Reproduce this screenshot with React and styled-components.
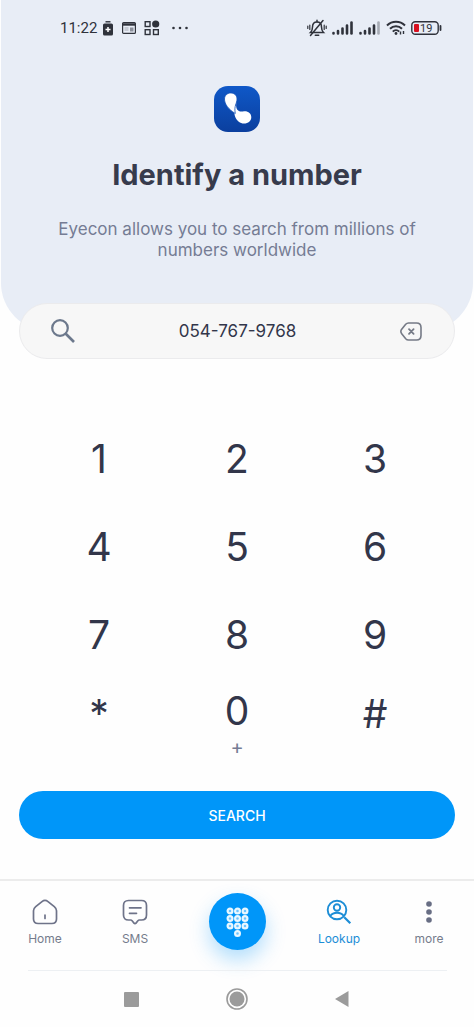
import React, { useState } from "react";
import styled, { createGlobalStyle } from "styled-components";

const GlobalStyle = createGlobalStyle`
  * {
    box-sizing: border-box;
  }
  body {
    margin: 0;
    background: #fefefe;
    font-family: "Inter", "Liberation Sans", sans-serif;
    color: #32364a;
  }
  button,
  input {
    font-family: inherit;
    color: inherit;
    border: none;
    padding: 0;
    background: none;
  }
  button {
    cursor: pointer;
  }
  svg {
    display: block;
    flex-shrink: 0;
  }
`;

const Page = styled.div`
  display: flex;
  flex-direction: column;
  min-height: 100vh;
`;

const Hero = styled.header`
  display: flex;
  flex-direction: column;
  align-items: center;
  margin: 0 1px;
  padding-bottom: 70px;
  background: #e8edf6;
  border-radius: 0 0 48px 48px;
`;

const StatusBar = styled.div`
  display: flex;
  align-items: center;
  justify-content: space-between;
  width: 100%;
  height: 56px;
  padding: 0 31px 0 59px;
  margin-bottom: 30px;
  color: #2f323b;
`;

const StatusGroup = styled.div`
  display: flex;
  align-items: center;
  gap: ${(props) => props.$gap}px;
`;

const Clock = styled.span`
  font-family: "Roboto", sans-serif;
  font-size: 15px;
  line-height: 20px;
`;

const Title = styled.h1`
  margin: 25px 0 0;
  font-size: 29px;
  line-height: 36px;
  font-weight: 700;
  color: #373b4c;
`;

const Subtitle = styled.p`
  max-width: 380px;
  margin: 26px 0 0;
  font-size: 17px;
  line-height: 21px;
  text-align: center;
  color: #757c94;
`;

const SearchBox = styled.label`
  display: flex;
  align-items: center;
  height: 56px;
  margin: -28px 19px 0;
  padding: 0 32px 0 31px;
  background: #f7f7f7;
  border: 1px solid #ebebed;
  border-radius: 28px;
`;

const NumberInput = styled.input`
  flex: 1;
  min-width: 0;
  font-size: 17px;
  line-height: 24px;
  text-align: center;
  outline: none;
`;

const IconButton = styled.button`
  display: flex;
`;

const Keypad = styled.div`
  display: grid;
  grid-template-columns: repeat(3, 1fr);
  grid-auto-rows: 88px;
  padding: 0 30px;
  margin-top: 56px;
`;

const Key = styled.button`
  display: flex;
  flex-direction: column;
  align-items: center;
  justify-content: ${(props) => (props.$bottom ? "flex-start" : "center")};
  padding-top: ${(props) => (props.$bottom ? 8 : 0)}px;
  font-size: 39px;
  line-height: ${(props) => (props.$symbol ? 54 : 48)}px;
`;

const KeyHint = styled.span`
  font-size: 20px;
  line-height: 24px;
  color: #757c94;
`;

const SearchButton = styled.button`
  height: 48px;
  margin: 24px 19px 40px;
  border-radius: 24px;
  background: #0096f9;
  color: #fff;
  font-size: 14px;
  font-weight: 500;
`;

const TabBar = styled.nav`
  display: flex;
  height: 91px;
  border-top: 2px solid #ececec;
`;

const Tab = styled.a`
  flex: 90 1 0;
  display: flex;
  flex-direction: column;
  align-items: center;
  gap: 6px;
  padding-top: 18px;
  font-size: 12px;
  line-height: 16px;
  text-decoration: none;
  color: ${(props) => (props.$active ? "#1c8dd6" : "#757c8c")};
`;

const DialSlot = styled.div`
  flex: 114 1 0;
  display: flex;
  justify-content: center;
  padding-top: 12px;
`;

const DialButton = styled.button`
  display: flex;
  align-items: center;
  justify-content: center;
  width: 57px;
  height: 57px;
  border-radius: 50%;
  background: #0096f9;
  box-shadow: 0 10px 20px rgba(0, 149, 250, 0.3);
`;

const SystemBar = styled.div`
  display: flex;
  align-items: center;
  justify-content: space-between;
  height: 57px;
  margin: 0 27px 0 28px;
  padding: 0 98px 0 96px;
  border-top: 1px solid #edf0f3;
`;

const keys = ["1", "2", "3", "4", "5", "6", "7", "8", "9", "*", "0", "#"];

const LeftStatusIcons = () => (
  <>
    <svg width="12" height="15" viewBox="0 0 12 15">
      <path d="M3.500 .8h5" stroke="currentColor" strokeWidth="1.400" />
      <rect x="1" y="2.500" width="10" height="12" rx="1.600" fill="currentColor" />
      <path d="M6 6v5M3.500 8.500h5" stroke="#fff" strokeWidth="1.500" />
    </svg>
    <svg width="14" height="12" viewBox="0 0 14 12">
      <rect x=".6" y=".6" width="12.800" height="10.800" rx="1" fill="none" stroke="currentColor" strokeWidth="1.200" />
      <path d="M1 2.500h12" stroke="currentColor" strokeWidth="2.400" />
      <path d="M2.500 6h4M2.500 8h4" stroke="#a5a9b3" />
      <rect x="8" y="5.500" width="3.500" height="4" fill="#8b8f9a" />
    </svg>
    <svg width="16" height="16" viewBox="0 0 16 16" fill="none" stroke="currentColor" strokeWidth="1.400">
      <rect x="1.200" y="1.700" width="4.800" height="4.800" />
      <circle cx="11.700" cy="4" r="3.600" fill="currentColor" stroke="none" />
      <rect x="1.200" y="9.700" width="4.800" height="4.800" />
      <rect x="9.500" y="9.700" width="4.800" height="4.800" />
    </svg>
  </>
);

const MoreDots = () => (
  <svg width="16" height="4" viewBox="0 0 16 4" fill="currentColor">
    <circle cx="1.500" cy="2" r="1.300" />
    <circle cx="8" cy="2" r="1.300" />
    <circle cx="14.500" cy="2" r="1.300" />
  </svg>
);

const MutedBell = () => (
  <svg width="20" height="18" viewBox="0 0 20 18" fill="none" stroke="currentColor" strokeWidth="1.500" strokeLinecap="round">
    <path d="M3.500 13.500h13c-1.600-1.500-2-2.500-2-5.500 0-3-1.700-5-4.500-5S5.500 5 5.500 8c0 3-.4 4-2 5.500z" />
    <path d="M8.300 16.200h3.400M10 1.200v1.500" />
    <path d="M2.800 6v4.500M.8 7v2.500M17.200 6v4.500M19.200 7v2.500" strokeWidth="1.200" />
    <path d="M3.500 16.500 16 1.500" />
  </svg>
);

const Signal = ({ weak }) => (
  <svg width="22" height="14" viewBox="0 0 22 14" stroke="currentColor" strokeWidth="2.600" strokeLinecap="round">
    <path d="M1.500 12.500v-.5M6 12.500v-2.500M10.500 12.500V7.500M15 12.500V4.500" />
    <path d="M19.500 12.500V1.500" opacity={weak ? 0.35 : 1} />
  </svg>
);

const Wifi = () => (
  <svg width="20" height="16" viewBox="0 0 20 16" fill="none" stroke="currentColor" strokeWidth="2">
    <path d="M1 5.500c5-5 13-5 18 0M4 8.800c3.400-3.400 8.600-3.400 12 0M6.800 11.600c1.800-1.800 4.600-1.800 6.400 0" />
    <circle cx="10" cy="13.500" r="1.400" fill="currentColor" stroke="none" />
    <path d="M14.500 11.500v3M17.500 11v3" strokeWidth="1.400" />
  </svg>
);

const Battery = () => (
  <svg width="31" height="14" viewBox="0 0 31 14">
    <rect x=".8" y=".8" width="26.400" height="12.400" rx="3.500" fill="none" stroke="currentColor" strokeWidth="1.400" />
    <path d="M29.500 5v4" stroke="currentColor" strokeWidth="1.800" strokeLinecap="round" />
    <rect x="3" y="3" width="5" height="8" rx="1" fill="#d8101f" />
    <text x="9" y="11" fontFamily="Roboto, sans-serif" fontSize="11" fill="currentColor">
      19
    </text>
  </svg>
);

const Logo = () => (
  <svg width="46" height="46" viewBox="0 0 46 46">
    <defs>
      <linearGradient id="logoBlue" x1="0" y1="0" x2="0" y2="1">
        <stop offset="0" stopColor="#0f58c8" />
        <stop offset="1" stopColor="#0b3f9e" />
      </linearGradient>
    </defs>
    <rect width="46" height="46" rx="14" fill="url(#logoBlue)" />
    <path d="M22.300 17c-1 6.500 2.200 9.300 6.700 8.400 4.700-.9 8.300 1.900 8.300 5.800 0 3.600-3 6.300-7.300 6.300-7.700 0-12.700-10-7.700-20.500z" fill="#fff" />
    <path
      d="M16.800 7c3.600 0 6.200 2.600 6.200 6 0 4.600-3.200 6.500-1.700 14.500C14.500 23.500 10.500 18 10.500 13c0-3.400 2.700-6 6.300-6z"
      fill="#fff"
      stroke="#1150b8"
      strokeWidth=".8"
    />
  </svg>
);

const SearchIcon = () => (
  <svg width="24" height="24" viewBox="0 0 24 24" fill="none" stroke="#6c788c" strokeWidth="2.200">
    <circle cx="9" cy="9" r="7.800" />
    <path d="M14.500 14.500 23 23" strokeWidth="2.600" />
  </svg>
);

const DeleteIcon = () => (
  <svg width="22" height="19" viewBox="0 0 22 19" fill="none" stroke="#757a86" strokeWidth="1.600" strokeLinecap="round" strokeLinejoin="round">
    <path d="M8.500 1h8c3 0 4.500 1.500 4.500 4.500v8c0 3-1.500 4.500-4.500 4.500h-8c-1.200 0-2-.4-2.800-1.300l-4-5c-1-1.300-1-3.100 0-4.400l4-5C6.500 1.400 7.300 1 8.500 1z" />
    <path d="m9 7.200 4.600 4.600M13.600 7.200 9 11.800" strokeWidth="1.800" />
  </svg>
);

const HomeIcon = () => (
  <svg width="26" height="26" viewBox="0 0 26 26" fill="none" stroke="#6e7389" strokeWidth="1.700" strokeLinecap="round">
    <path d="M1.500 11.800c0-1.700.7-3 2.200-4.200l6.300-5c2-1.600 4-1.600 6 0l6.300 5c1.500 1.200 2.200 2.500 2.200 4.200V20c0 3-1.600 4.500-4.600 4.500H6.100c-3 0-4.600-1.500-4.600-4.500z" />
    <path d="M13 16v3.500" />
  </svg>
);

const SmsIcon = () => (
  <svg width="26" height="26" viewBox="0 0 26 26" fill="none" stroke="#6e7389" strokeWidth="1.700" strokeLinecap="round" strokeLinejoin="round">
    <path d="M6.500 1.500h13c3.300 0 5 1.700 5 5V16c0 3.300-1.700 5-5 5h-2.200c-.6 0-1 .3-1.400.8l-1.900 2.300c-.6.700-1.400.7-2 0l-1.900-2.300c-.4-.5-.8-.8-1.400-.8H6.500c-3.300 0-5-1.700-5-5V6.500c0-3.300 1.700-5 5-5z" />
    <path d="M7.500 8.800h11.500M7.500 14.300h7" />
  </svg>
);

const LookupIcon = () => (
  <svg width="26" height="26" viewBox="0 0 26 26" fill="none" stroke="#1c8dd6" strokeWidth="1.900">
    <circle cx="11" cy="11" r="9.300" />
    <circle cx="11" cy="8.500" r="3.200" />
    <path d="M4.300 17c1.500-2.300 3.900-3.300 6.700-3.300s5.200 1 6.700 3.300" />
    <path d="m18.300 18.300 6 6" strokeWidth="2.200" />
  </svg>
);

const MoreIcon = () => (
  <svg width="26" height="26" viewBox="0 0 26 26" fill="#686e84">
    <circle cx="13" cy="5" r="2.800" />
    <circle cx="13" cy="13" r="2.800" />
    <circle cx="13" cy="21" r="2.800" />
  </svg>
);

const dots = [
  [4, 4], [11.500, 4], [19, 4],
  [4, 11.500], [11.500, 11.500], [19, 11.500],
  [4, 19], [11.500, 19], [19, 19],
  [11.500, 26.500],
];

const DialIcon = () => (
  <svg width="23" height="30" viewBox="0 0 23 30" fill="#6cc4ff" stroke="#e9f7ff" strokeWidth="2.200">
    {dots.map(([x, y]) => (
      <circle key={`${x}-${y}`} cx={x} cy={y} r="2.400" />
    ))}
  </svg>
);

export default function App() {
  const [number, setNumber] = useState("054-767-9768");

  return (
    <Page>
      <GlobalStyle />
      <Hero>
        <StatusBar>
          <StatusGroup $gap={12}>
            <StatusGroup $gap={5}>
              <Clock>11:22</Clock>
              <StatusGroup $gap={8}>
                <LeftStatusIcons />
              </StatusGroup>
            </StatusGroup>
            <MoreDots />
          </StatusGroup>
          <StatusGroup $gap={5}>
            <MutedBell />
            <Signal />
            <Signal weak />
            <Wifi />
            <Battery />
          </StatusGroup>
        </StatusBar>
        <Logo />
        <Title>Identify a number</Title>
        <Subtitle>Eyecon allows you to search from millions of numbers worldwide</Subtitle>
      </Hero>
      <SearchBox>
        <SearchIcon />
        <NumberInput
          type="tel"
          aria-label="Phone number"
          value={number}
          onChange={(e) => setNumber(e.target.value)}
        />
        <IconButton type="button" aria-label="Delete" onClick={() => setNumber(number.slice(0, -1))}>
          <DeleteIcon />
        </IconButton>
      </SearchBox>
      <Keypad>
        {keys.map((key, i) => (
          <Key
            key={key}
            type="button"
            $bottom={i > 8}
            $symbol={key === "*" || key === "#"}
            onClick={() => setNumber(number + key)}
          >
            {key}
            {key === "0" && <KeyHint>+</KeyHint>}
          </Key>
        ))}
      </Keypad>
      <SearchButton type="button">SEARCH</SearchButton>
      <TabBar>
        <Tab href="#home">
          <HomeIcon />
          Home
        </Tab>
        <Tab href="#sms">
          <SmsIcon />
          SMS
        </Tab>
        <DialSlot>
          <DialButton type="button" aria-label="Dial pad">
            <DialIcon />
          </DialButton>
        </DialSlot>
        <Tab href="#lookup" $active>
          <LookupIcon />
          Lookup
        </Tab>
        <Tab href="#more">
          <MoreIcon />
          more
        </Tab>
      </TabBar>
      <SystemBar>
        <IconButton type="button" aria-label="Recent apps">
          <svg width="15" height="15" viewBox="0 0 15 15">
            <rect width="15" height="15" rx="1" fill="#9b9b9b" />
          </svg>
        </IconButton>
        <IconButton type="button" aria-label="Home screen">
          <svg width="22" height="22" viewBox="0 0 22 22">
            <circle cx="11" cy="11" r="10" fill="none" stroke="#9b9b9b" strokeWidth="1.600" />
            <circle cx="11" cy="11" r="7.500" fill="#9b9b9b" />
          </svg>
        </IconButton>
        <IconButton type="button" aria-label="Back">
          <svg width="14" height="16" viewBox="0 0 14 16">
            <path d="M13.500 0v16L0 8z" fill="#9b9b9b" />
          </svg>
        </IconButton>
      </SystemBar>
    </Page>
  );
}
